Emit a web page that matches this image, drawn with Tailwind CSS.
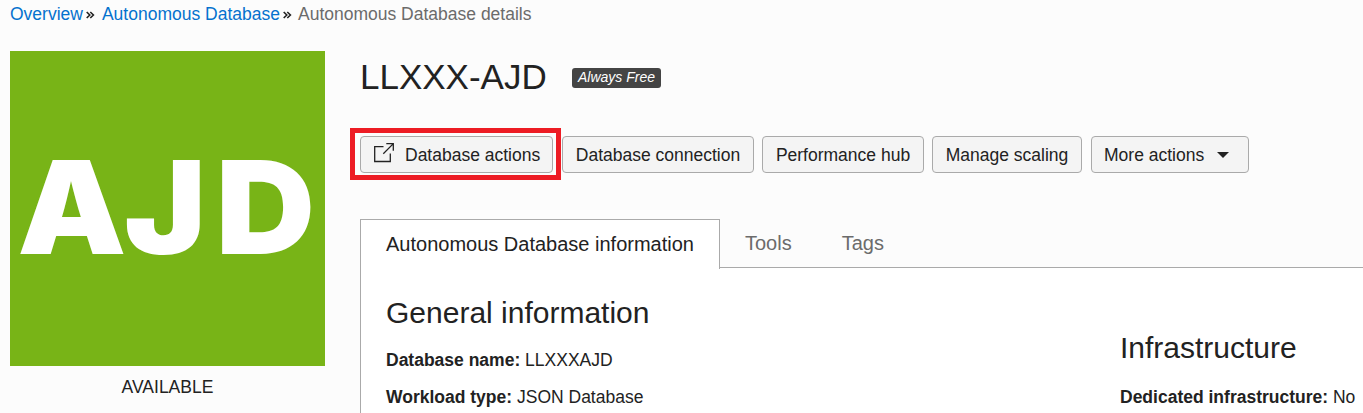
<!DOCTYPE html>
<html lang="en">
<head>
<meta charset="utf-8">
<title>Autonomous Database details</title>
<script src="https://cdn.jsdelivr.net/npm/@tailwindcss/browser@4"></script>
</head>
<body class="h-[413px] w-[1363px] overflow-hidden bg-[#fcfcfc] font-['Liberation_Sans',Arial,sans-serif] text-[17.5px] leading-5 text-[#222]">
<nav class="flex h-[51px] items-start pl-[10px] pt-1 whitespace-nowrap text-[#0572ce]">
  <a>Overview</a>
  <svg class="mt-[7px] ml-[3px] mr-[7px] shrink-0" width="9" height="8" viewBox="0 0 9 8" fill="none" stroke="#222" stroke-width="1.6"><path d="M.7 1 3.8 4 .7 7M4.3 1 7.4 4 4.3 7"/></svg>
  <a>Autonomous Database</a>
  <svg class="mt-[7px] ml-[3px] mr-[6px] shrink-0" width="9" height="8" viewBox="0 0 9 8" fill="none" stroke="#222" stroke-width="1.6"><path d="M.7 1 3.8 4 .7 7M4.3 1 7.4 4 4.3 7"/></svg>
  <span class="text-[#6b6b6b]">Autonomous Database details</span>
</nav>
<div class="flex pl-[10px]">
  <aside class="w-[315px] shrink-0">
    <svg class="block bg-[#78b417]" width="315" height="315" viewBox="0 0 315 315" fill="#fff" font-family="Inter, sans-serif" font-weight="900" font-size="129"><text transform="scale(1.065 1)" x="6.9 107.2 193.2" y="203">AJD</text></svg>
    <div class="pt-[11px] text-center">AVAILABLE</div>
  </aside>
  <main class="ml-[35px] flex min-w-0 flex-1 flex-col">
    <header class="flex h-[77px] items-start">
      <h1 class="mt-[6px] w-[212px] text-[35px] leading-10">LLXXX-AJD</h1>
      <span class="mt-[17px] h-5 w-[89px] rounded-[3px] bg-[#444] pl-[6px] text-[14px] leading-[19px] whitespace-nowrap text-white italic">Always Free</span>
    </header>
    <div class="-ml-[10px] -mt-px flex h-[92px] items-start whitespace-nowrap">
      <div class="mt-px flex h-[52px] w-[211px] shrink-0 border-5 border-[#ed1c24] pt-[3px] pl-[5px]">
        <button class="flex h-[37px] w-[193px] items-center rounded border border-[#aaa] bg-[#f4f4f4] pl-[13px]">
          <svg class="mr-[11px] -mt-[3px]" width="20" height="20" viewBox="0 0 20 20" fill="none" stroke="#222" stroke-width="1.3"><path d="M9.5 3.6H.7V18.5H16.3V10.5M9.3 10.7 19.1.9M12.3.7H19.3V7.7"/></svg>
          <span>Database actions</span>
        </button>
      </div>
      <div class="ml-px mt-[9px] flex gap-2">
        <button class="h-[37px] w-[192px] rounded border border-[#aaa] bg-[#f4f4f4]">Database connection</button>
        <button class="h-[37px] w-[162px] rounded border border-[#aaa] bg-[#f4f4f4]">Performance hub</button>
        <button class="h-[37px] w-[150px] rounded border border-[#aaa] bg-[#f4f4f4]">Manage scaling</button>
        <button class="ml-px flex h-[37px] w-[158px] items-center rounded border border-[#aaa] bg-[#f4f4f4] pl-[12px]">More actions<svg class="ml-[13px]" width="12" height="6" viewBox="0 0 12 6" fill="#222"><path d="M0 0H12L6 6Z"/></svg></button>
      </div>
    </div>
    <div class="flex h-[49px] items-stretch text-xl leading-[49px] text-[#6b6b6b]">
      <div class="z-10 h-[50px] w-[360px] shrink-0 border border-b-0 border-[#aaa] bg-white pl-[25px] text-[#222]">Autonomous Database information</div>
      <div class="flex flex-1 gap-[50px] border-b border-[#aaa] pl-[25px] leading-[48px]"><span>Tools</span><span>Tags</span></div>
    </div>
    <div class="flex h-[145px] border-l border-[#aaa] bg-white pl-[25px]">
      <section class="w-[734px] shrink-0 pt-[27px]">
        <h2 class="text-[30px] leading-9">General information</h2>
        <p class="mt-[19px]"><b>Database name:</b> LLXXXAJD</p>
        <p class="mt-[17px]"><b>Workload type:</b> JSON Database</p>
      </section>
      <section class="pt-[62px] whitespace-nowrap">
        <h2 class="text-[30px] leading-9">Infrastructure</h2>
        <p class="mt-[21px]"><b>Dedicated infrastructure:</b> No</p>
      </section>
    </div>
  </main>
</div>
</body>
</html>
